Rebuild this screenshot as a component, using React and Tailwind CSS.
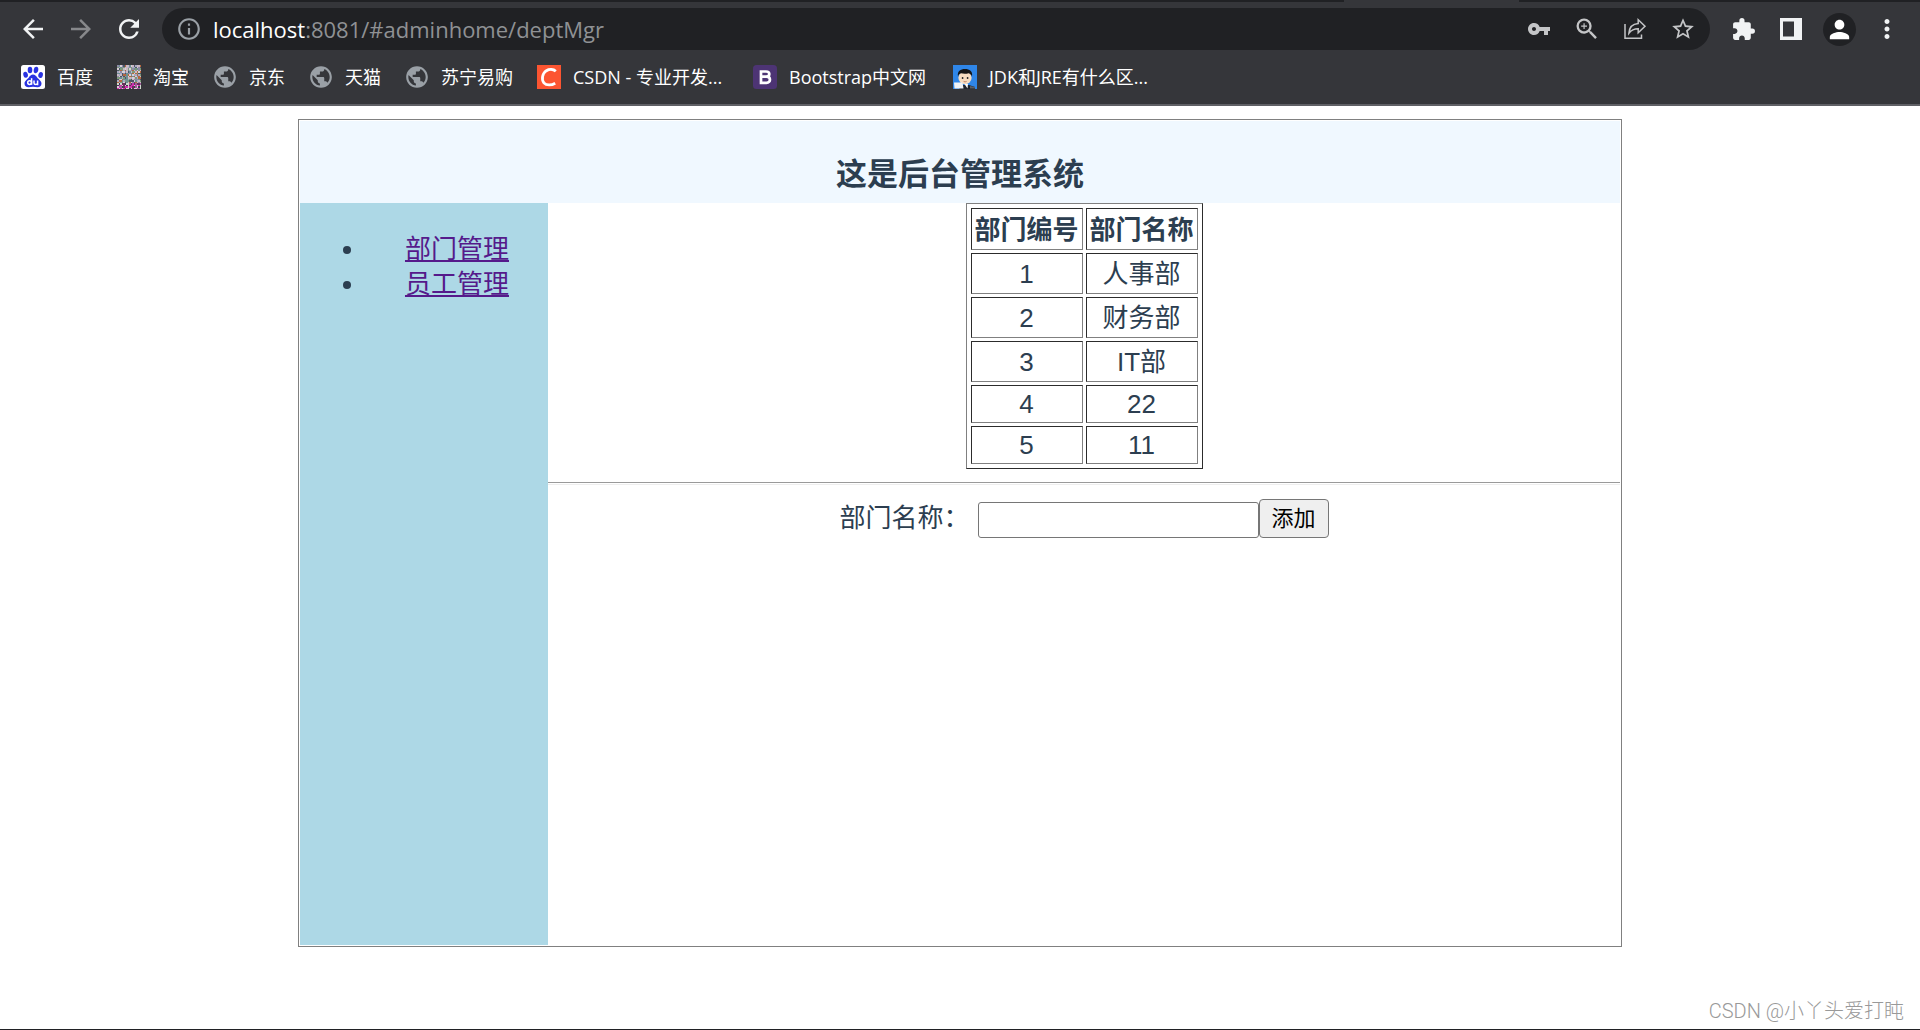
import React from 'react';
import {
  MdArrowBack,
  MdArrowForward,
  MdRefresh,
  MdInfoOutline,
  MdVpnKey,
  MdZoomIn,
  MdStarBorder,
  MdExtension,
  MdMoreVert,
  MdPerson,
  MdPublic,
} from 'react-icons/md';

const departments = [
  { id: 1, name: '人事部' },
  { id: 2, name: '财务部' },
  { id: 3, name: 'IT部' },
  { id: 4, name: '22' },
  { id: 5, name: '11' },
];

const BaiduIcon = () => (
  <svg viewBox="0 0 24 24" className="h-6 w-6">
    <rect width="24" height="24" rx="2.5" fill="#fff" />
    <g fill="#2932e1">
      <ellipse cx="4.6" cy="9.8" rx="2.3" ry="3" transform="rotate(-12 4.6 9.8)" />
      <ellipse cx="9" cy="5" rx="2.3" ry="3.2" />
      <ellipse cx="15" cy="5" rx="2.3" ry="3.2" transform="rotate(8 15 5)" />
      <ellipse cx="19.6" cy="10" rx="2.3" ry="3" transform="rotate(12 19.6 10)" />
      <path d="M12 9.6c2 0 3 1.4 4.2 2.9 1.4 1.7 4.3 3.3 4.3 6.1 0 2.6-1.9 3.8-4.2 3.7-1.6-.1-2.7-.5-4.3-.5s-2.7.4-4.3.5c-2.3.1-4.2-1.1-4.2-3.7 0-2.8 2.9-4.4 4.3-6.1C9 11 10 9.6 12 9.6z" />
    </g>
    <g fill="none" stroke="#fff" strokeWidth="1.5">
      <path d="M10.600 13.200v6.600" />
      <circle cx="8.600" cy="17.600" r="1.900" />
      <path d="M13 15.400v2.600c0 2 3.600 2 3.600 0v-2.600v4.800" />
    </g>
  </svg>
);

const mosaicColors = ['#8f8aa8', '#c9b8c4', '#6d8f92', '#b5683f', '#a7a9c2', '#4d5566', '#d9cfd6', '#7c9a7a'];
const mosaicPinks = ['#d02fb0', '#e6c3dc', '#39414a', '#9c5f9a', '#cfd8cc', '#6b2f5d'];

const TaobaoIcon = () => (
  <svg viewBox="0 0 16 16" className="h-6 w-6" shapeRendering="crispEdges">
    {Array.from({ length: 256 }, (_, i) => {
      const x = i % 16;
      const y = Math.floor(i / 16);
      const seed = (x * 37 + y * 23 + x * y * 11 + ((x * x) % 7) * 5) % 97;
      const palette = y > 11 ? mosaicPinks : mosaicColors;
      return <rect key={i} x={x} y={y} width="1" height="1" fill={palette[seed % palette.length]} />;
    })}
  </svg>
);

// Filled globe with dark land masses
const GlobeIcon = () => (
  <span className="flex h-6 w-6 items-center justify-center">
    <MdPublic className="h-[26px] w-[26px] shrink-0 text-[#9aa0a6]" />
  </span>
);

const CsdnIcon = () => (
  <svg viewBox="0 0 24 24" className="h-6 w-6">
    <rect width="24" height="24" fill="#fc5531" />
    <path
      d="M18.800 6.200C16.500 4.200 12.400 3.800 9.400 5.700C5.200 8.500 4.300 14.600 6.900 17.800C9.400 20.700 14.600 20.400 18.200 18.200"
      fill="none"
      stroke="#fff"
      strokeWidth="2.800"
    />
  </svg>
);

const BootstrapIcon = () => (
  <svg viewBox="0 0 24 24" className="h-6 w-6">
    <rect width="24" height="24" rx="3.500" fill="#4d3474" />
    <path
      d="M8 6.500h5c4.400 0 4.400 5.200 0 5.200H8h5.500c4.600 0 4.600 6.100 0 6.100H8z"
      fill="none"
      stroke="#fff"
      strokeWidth="2.700"
    />
  </svg>
);

const AvatarIcon = () => (
  <svg viewBox="0 0 24 24" className="h-6 w-6">
    <rect width="24" height="24" fill="#2f86e8" />
    <path d="M9 20h7l6 2v2H6z" fill="#20242c" />
    <path d="M11.500 19h3.500l-.5 4.500z" fill="#fff" />
    <ellipse cx="12" cy="12.800" rx="6.600" ry="6.400" fill="#f6dcc0" />
    <path d="M5 11.500C4 6 7.500 4 12 4s8 2 7 7.500c-.6-1.800-1.700-2.800-3.300-3.300-2.700.7-5.500.6-7.700.1C6.500 8.700 5.500 9.700 5 11.500z" fill="#161616" />
    <circle cx="9.600" cy="13" r=".9" fill="#222" />
    <circle cx="14.600" cy="13" r=".9" fill="#222" />
    <path d="M10.600 16.400q1.500 1 3 0" fill="none" stroke="#b5694a" strokeWidth=".8" />
    <path d="M1 17.500h8.500l1 6H1.500z" fill="#f1f3f6" />
    <path d="M17 21l5 1v1.500h-5z" fill="#5b6068" />
  </svg>
);

const ShareIcon = () => (
  <svg viewBox="0 0 24 24" className="h-6 w-6" fill="none" stroke="currentColor" strokeWidth="1.500">
    <path d="M2 7v14.200h16.500V17.500" />
    <path d="M15.200 2.800v3.800C9.500 7 6.300 10.600 5.900 16.200c2.300-3 5-4.400 9.300-4.400v4L22 9.200z" />
  </svg>
);

const SidePanelIcon = () => (
  <svg viewBox="0 0 22 22" className="h-[22px] w-[22px]" fill="currentColor">
    <path fillRule="evenodd" d="M0 0h22v22H0zM3 3.500v15h11v-15z" />
  </svg>
);

const bookmarks = [
  { label: '百度', icon: BaiduIcon },
  { label: '淘宝', icon: TaobaoIcon },
  { label: '京东', icon: GlobeIcon },
  { label: '天猫', icon: GlobeIcon },
  { label: '苏宁易购', icon: GlobeIcon },
  { label: 'CSDN - 专业开发...', icon: CsdnIcon, width: 'w-48' },
  { label: 'Bootstrap中文网', icon: BootstrapIcon, width: 'w-44' },
  { label: 'JDK和JRE有什么区...', icon: AvatarIcon },
];

const ToolButton = ({ label, className = '', children }) => (
  <button type="button" aria-label={label} className={`flex h-[42px] w-12 shrink-0 items-center justify-center ${className}`}>
    {children}
  </button>
);

const BrowserBar = () => (
  <header className="border-b-2 border-[#5f6065] bg-[#35363a] font-['Open_Sans','Noto_Sans_CJK_SC',sans-serif]">
    {/* Bottom edge of the tab strip, open under the active tab */}
    <div className="flex h-[2px]">
      <div className="flex-[77] bg-[#202124]"></div>
      <div className="flex-[10]"></div>
      <div className="flex-[23] bg-[#202124]"></div>
    </div>

    <div className="flex items-center px-[9px] pt-[6px] text-[#f1f3f4]">
      <ToolButton label="返回"><MdArrowBack className="h-[30px] w-[30px]" /></ToolButton>
      <ToolButton label="前进" className="text-[#87888b]"><MdArrowForward className="h-[30px] w-[30px]" /></ToolButton>
      <ToolButton label="刷新"><MdRefresh className="h-[30px] w-[30px]" /></ToolButton>

      <div className="mx-[9px] flex h-[42px] flex-1 items-center rounded-full bg-[#202124] pr-[3px] pl-[14px]">
        <MdInfoOutline className="h-[26px] w-[26px] text-[#9aa0a6]" />
        <p className="flex-1 pl-[11px] text-[22px] leading-[40px] text-[#8f9194]">
          <span className="text-white">localhost</span>:8081/#adminhome/deptMgr
        </p>
        <div className="flex text-[#c4c5c7]">
          <ToolButton label="密码"><MdVpnKey className="h-6 w-6" /></ToolButton>
          <ToolButton label="缩放"><MdZoomIn className="h-7 w-7" /></ToolButton>
          <ToolButton label="分享"><ShareIcon /></ToolButton>
          <ToolButton label="收藏"><MdStarBorder className="h-[26px] w-[26px]" /></ToolButton>
        </div>
      </div>

      <ToolButton label="扩展程序"><MdExtension className="h-[25px] w-[25px]" /></ToolButton>
      <ToolButton label="侧边栏"><SidePanelIcon /></ToolButton>
      <ToolButton label="用户">
        <span className="flex h-[33px] w-[33px] items-center justify-center rounded-full bg-[#202124]">
          <MdPerson className="h-[29px] w-[29px] text-white" />
        </span>
      </ToolButton>
      <ToolButton label="更多"><MdMoreVert className="h-[30px] w-[30px]" /></ToolButton>
    </div>

    <nav className="flex gap-6 px-[21px] pt-[15px] pb-[15px] text-lg leading-6 whitespace-nowrap text-white">
      {bookmarks.map(({ label, icon: Icon, width = '' }) => (
        <a key={label} href="#" className={`flex items-center gap-3 ${width}`}>
          <Icon />
          {label}
        </a>
      ))}
    </nav>
  </header>
);

const Cell = ({ as: Tag = 'td', className = '', children }) => (
  <Tag className={`border border-t-[#2c2c2c] border-r-[#808080] border-b-[#808080] border-l-[#2c2c2c] px-[2px] py-0 ${className}`}>
    {children}
  </Tag>
);

const DeptTable = () => (
  <table className="mx-auto border-separate border-spacing-[3px] border border-t-[#808080] border-r-[#2c2c2c] border-b-[#2c2c2c] border-l-[#808080] p-px text-center leading-[36px]">
    <thead>
      <tr className="h-[42px]">
        <Cell as="th" className="w-[112px] pt-[2px]">部门编号</Cell>
        <Cell as="th" className="w-[112px] pt-[2px]">部门名称</Cell>
      </tr>
    </thead>
    <tbody>
      {departments.map((dept) => (
        <tr key={dept.id} className={/^\d+$/.test(dept.name) ? 'h-[38px]' : 'h-[41px]'}>
          <Cell>{dept.id}</Cell>
          <Cell>{dept.name}</Cell>
        </tr>
      ))}
    </tbody>
  </table>
);

const App = () => {
  return (
    <div className="relative flex min-h-screen flex-col border-b border-[#202124] bg-white">
      <BrowserBar />

      <div className="mx-auto mt-[13px] mb-[82px] flex w-full max-w-[1324px] flex-1 flex-col border border-[#808080] p-px font-['Liberation_Sans','Noto_Sans_CJK_SC',sans-serif] text-[26px] text-[#2c3e50]">
        <h2 className="bg-[#f0f8ff] pt-8 pb-[6px] text-center text-[31px] leading-[44px] font-bold">
          这是后台管理系统
        </h2>

        <div className="flex flex-1">
          <aside className="w-[248px] shrink-0 bg-[#add8e6]">
            <ul className="mt-[29px] list-disc pl-[66px] text-center leading-[35px]">
              <li><a href="#adminhome/deptMgr" className="text-[#551a8b] underline">部门管理</a></li>
              <li><a href="#adminhome/empMgr" className="text-[#551a8b] underline">员工管理</a></li>
            </ul>
          </aside>

          <main className="flex-1">
            <DeptTable />
            <hr className="mt-[13px] mb-[14px] h-[3px] border-t border-b border-t-[#9a9a9a] border-b-[#eeeeee]" />
            <form className="flex items-end justify-center" onSubmit={(e) => e.preventDefault()}>
              <label htmlFor="deptName" className="mr-2 leading-[39px]">部门名称：</label>
              <input
                id="deptName"
                type="text"
                className="h-[36px] w-[281px] rounded-[3px] border border-[#767676] bg-white px-1 text-[22px] text-black"
              />
              <button
                type="submit"
                className="h-[39px] w-[70px] rounded-[4px] border border-[#767676] bg-[#efefef] text-[22px] leading-[37px] text-black"
              >
                添加
              </button>
            </form>
          </main>
        </div>
      </div>

      <p className="absolute right-4 bottom-1 font-[Roboto,'Noto_Sans_CJK_SC',sans-serif] text-xl leading-7 font-light text-[#999999]">
        CSDN @小丫头爱打盹
      </p>
    </div>
  );
};

export default App;
